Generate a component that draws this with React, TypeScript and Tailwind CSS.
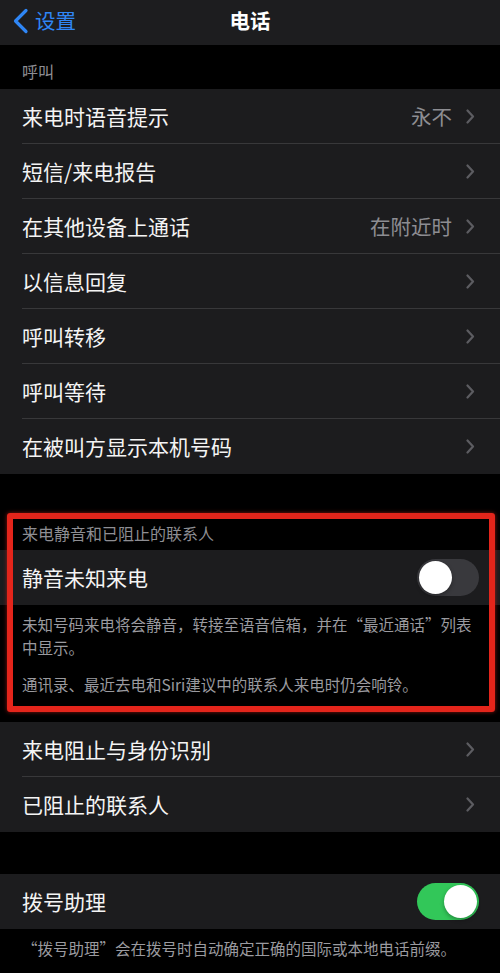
import React from 'react';

const font = { fontFamily: '"Noto Sans CJK SC", "Noto Sans", sans-serif' };

function Chevron() {
    return (
        <svg width="9" height="15" viewBox="0 0 9 15" fill="none" className="shrink-0">
            <path d="M1.5 1.5 L7 7.5 L1.5 13.5" stroke="#5c5c61" strokeWidth="2.2" strokeLinecap="round" strokeLinejoin="round" />
        </svg>
    );
}

function Toggle({ on }: { on: boolean }) {
    return (
        <div className={`w-[62px] h-[37px] rounded-full p-[2px] flex items-center ${on ? 'bg-[#32c759] justify-end' : 'bg-[#39393d] justify-start'}`}>
            <div className="w-[33px] h-[33px] rounded-full bg-white shadow-[0_2px_4px_rgba(0,0,0,0.3)]" />
        </div>
    );
}

interface RowProps {
    label: string;
    detail?: string;
    toggle?: boolean;
    last?: boolean;
}

function Row({ label, detail, toggle, last }: RowProps) {
    const hasToggle = toggle !== undefined;
    return (
        <div className="h-[55px] bg-[#1c1c1e] pl-[22px] flex">
            <div className={`flex-1 flex items-center ${hasToggle ? 'pr-[21px]' : 'pr-[25px]'} ${last ? '' : 'border-b border-[#38383a]'}`}>
                <span className="flex-1 text-[21px] text-[#f4f4f4] leading-none">{label}</span>
                {hasToggle ? (
                    <Toggle on={toggle} />
                ) : (
                    <div className="flex items-center gap-[14px]">
                        {detail && <span className="text-[20.5px] text-[#8d8d92] leading-none">{detail}</span>}
                        <Chevron />
                    </div>
                )}
            </div>
        </div>
    );
}

export default function App() {
    const calls = [
        { label: '来电时语音提示', detail: '永不' },
        { label: '短信/来电报告' },
        { label: '在其他设备上通话', detail: '在附近时' },
        { label: '以信息回复' },
        { label: '呼叫转移' },
        { label: '呼叫等待' },
        { label: '在被叫方显示本机号码' },
    ];

    return (
        <div className="min-h-[973px] w-[500px] bg-black flex flex-col overflow-hidden" style={font}>
            {/* nav bar */}
            <div className="h-[45px] bg-[#1d1d1f] flex items-center pb-[4px] relative shrink-0">
                <div className="flex items-center pl-[12px] gap-[6px]">
                    <svg width="17" height="26" viewBox="0 0 17 26" fill="none">
                        <path d="M14 2.5 L3.5 13 L14 23.5" stroke="#2f86f5" strokeWidth="3.2" strokeLinecap="round" strokeLinejoin="round" />
                    </svg>
                    <span className="text-[20.5px] text-[#2f86f5] leading-none">设置</span>
                </div>
                <span className="absolute left-1/2 -translate-x-1/2 text-[20.5px] font-semibold text-white leading-none">电话</span>
            </div>

            {/* 呼叫 */}
            <div className="h-[44px] px-[22px] flex items-end pb-[8px]">
                <span className="text-[16px] text-[#8e8e93] leading-[20px]">呼叫</span>
            </div>
            <div>
                {calls.map((c, i) => (
                    <Row key={c.label} label={c.label} detail={c.detail} last={i === calls.length - 1} />
                ))}
            </div>

            <div className="h-[39px] shrink-0" />

            {/* highlighted group */}
            <div className="relative">
                <div className="h-[37px] px-[22px] flex items-end pb-[7px]">
                    <span className="text-[16px] text-[#8e8e93] leading-[20px]">来电静音和已阻止的联系人</span>
                </div>
                <Row label="静音未知来电" toggle={false} last />
                <div className="pl-[22px] pr-[22px] pt-[8px] pb-[16px] text-[15.5px] leading-[23px] text-[#9a9a9f] flex flex-col gap-[14px]">
                    <p>未知号码来电将会静音，转接至语音信箱，并在“最近通话”列表中显示。</p>
                    <p>通讯录、最近去电和Siri建议中的联系人来电时仍会响铃。</p>
                </div>
                <div className="absolute top-0 bottom-0 left-[7px] right-[5px] border-[6px] border-[#e4251b] rounded-[3px] shadow-[0_0_4px_rgba(228,37,27,0.6)] pointer-events-none" />
            </div>

            <div className="h-[10px] shrink-0" />

            <div>
                <Row label="来电阻止与身份识别" />
                <Row label="已阻止的联系人" last />
            </div>

            <div className="h-[42px] shrink-0" />

            <Row label="拨号助理" toggle={true} last />
            <div className="px-[22px] pt-[8px] text-[15.5px] leading-[22px] text-[#9a9a9f]">
                “拨号助理”会在拨号时自动确定正确的国际或本地电话前缀。
            </div>
        </div>
    );
}
